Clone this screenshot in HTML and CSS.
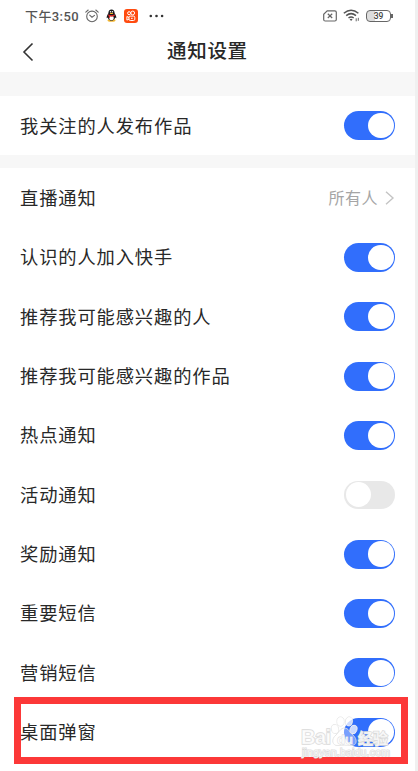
FILE: index.html
```html
<!DOCTYPE html>
<html lang="zh-CN">
  <head>
    <meta charset="UTF-8" />
    <meta name="viewport" content="width=device-width, initial-scale=1.0" />
    <title>通知设置</title>
    <link rel="stylesheet" href="styles.css">
  </head>
  <body>
    <div class="screen">
      <div class="status-bar">
        <span class="time">下午3:50</span>
        <svg class="alarm" width="14" height="14" viewBox="0 0 14 14" fill="none" stroke="#666" stroke-width="1.1" stroke-linecap="round">
          <circle cx="7" cy="7.4" r="5.3" />
          <path d="M.8 3.2 3.2 1M13.2 3.2 10.8 1M4.7 6.2 7 8.2l2.5-1.8" />
        </svg>
        <svg class="penguin" width="11" height="13" viewBox="0 0 11 13">
          <ellipse cx="5.5" cy="11.4" rx="4" ry="1.3" fill="#f2b632" />
          <path d="M5.5.4C3.5.4 2.3 1.9 2.4 4.2 1.3 6 .5 7.4.7 9.2l1-.7c.5 2 2 3.2 3.8 3.2s3.3-1.2 3.8-3.2l1 .7c.2-1.8-.6-3.2-1.7-5C8.7 1.9 7.5.4 5.5.4z" fill="#16181c" />
          <ellipse cx="5.5" cy="9" rx="2.3" ry="2.2" fill="#fff" />
          <circle cx="4.5" cy="2.8" r=".7" fill="#fff" />
          <circle cx="6.5" cy="2.8" r=".7" fill="#fff" />
          <ellipse cx="5.5" cy="4.4" rx="1.7" ry=".6" fill="#f2b632" />
          <path d="M2.2 5.300c2 1.200 4.600 1.200 6.600 0v1.500c-1.600.8-3.300 1-4.800.7v1.300H2.800V6.900l-.6-.3z" fill="#dc2a2a" />
        </svg>
        <svg class="kuaishou" width="14" height="14" viewBox="0 0 14 14">
          <rect width="14" height="14" rx="3" fill="#ff4b10" />
          <g fill="none" stroke="#fff" stroke-width="1">
            <circle cx="5.1" cy="4.2" r="1.5" />
            <circle cx="8.7" cy="4" r="1.9" />
            <rect x="5" y="7.1" width="5.8" height="4.4" rx="1.3" />
            <path d="M5 8.5 2.9 7.5v3.600L5 10.1M7 9.3h1.7" />
          </g>
        </svg>
        <svg class="more" width="15" height="4" viewBox="0 0 15 4" fill="#333">
          <circle cx="1.8" cy="2" r="1.3" />
          <circle cx="7.5" cy="2" r="1.3" />
          <circle cx="13.1" cy="2" r="1.3" />
        </svg>
        <div class="status-right">
          <svg width="14" height="12" viewBox="0 0 14 12" fill="none" stroke="#666" stroke-width="1.2">
            <path d="M4.2.8h7.6q1.5 0 1.5 1.5v7.200q0 1.5-1.5 1.5H2.200Q.7 11 .7 9.500V4.200z" />
            <path d="m4.800 3.800 4.400 4.200M9.200 3.800 4.800 8" />
          </svg>
          <svg width="17" height="13" viewBox="0 0 17 13" fill="none" stroke="#555" stroke-width="1.5">
            <path d="M.8 4.300q7.300-6.200 14.600 0M3.200 6.700q4.900-4.100 9.800 0M5.500 9q2.600-2 5.200 0" />
            <path d="m6.600 10.200 1.500 1.700 1.500-1.700q-1.500-1-3 0z" fill="#555" stroke="none" />
            <path d="M13.200 9.300v3M15.300 8.800v3" stroke-width=".9" />
          </svg>
          <div class="battery">39</div>
        </div>
      </div>

      <div class="header">
        <svg class="back" width="12" height="20" viewBox="0 0 12 20" fill="none" stroke="#333" stroke-width="1.6">
          <path d="M10.500 1.500 2 10l8.500 8.500" />
        </svg>
        <h1>通知设置</h1>
      </div>

      <div class="group">
        <div class="row"><span>我关注的人发布作品</span><div class="switch on"></div></div>
      </div>

      <div class="group list">
        <div class="row">
          <span>直播通知</span>
          <div class="value">
            <span>所有人</span>
            <svg width="10" height="16" viewBox="0 0 10 16" fill="none" stroke="#c4c4c4" stroke-width="1.4">
              <path d="m1 1.700 7 6.300-7 6.300" />
            </svg>
          </div>
        </div>
        <div class="row"><span>认识的人加入快手</span><div class="switch on"></div></div>
        <div class="row"><span>推荐我可能感兴趣的人</span><div class="switch on"></div></div>
        <div class="row"><span>推荐我可能感兴趣的作品</span><div class="switch on"></div></div>
        <div class="row"><span>热点通知</span><div class="switch on"></div></div>
        <div class="row"><span>活动通知</span><div class="switch"></div></div>
        <div class="row"><span>奖励通知</span><div class="switch on"></div></div>
        <div class="row"><span>重要短信</span><div class="switch on"></div></div>
        <div class="row"><span>营销短信</span><div class="switch on"></div></div>
        <div class="row"><span>桌面弹窗</span><div class="switch on"></div></div>
      </div>

      <div class="highlight"></div>

      <svg class="watermark" width="100" height="52" viewBox="0 0 100 52">
        <ellipse cx="35" cy="19" rx="3.500" ry="4.500" transform="rotate(-15 35 19)" />
        <ellipse cx="40.500" cy="11.500" rx="3.500" ry="4.500" />
        <ellipse cx="49" cy="11.500" rx="3.500" ry="4.500" transform="rotate(10 49 11.500)" />
        <ellipse cx="53.500" cy="19.500" rx="3.500" ry="4.500" transform="rotate(20 53.500 19.500)" />
        <path class="pad" d="M44.500 18c-4 0-5 4-8.500 7-5 4-4 11 2 10.500 4-.5 9-.5 13 0 6 .5 7-6 2-10.500-3.500-3-4.500-7-8.500-7z" />
        <text class="brand" x="1" y="34" textLength="30">Bai</text>
        <text class="du" x="37" y="33.500" textLength="16">du</text>
        <text class="brand-cn" x="58" y="34" textLength="30">经验</text>
        <text class="site" x="2" y="46" textLength="88">jingyan.baidu.com</text>
      </svg>
    </div>
  </body>
</html>
```
FILE: styles.css
```css
* {
  box-sizing: border-box;
}

body {
  margin: 0;
  background: #f0f0f0;
  font-family: "Noto Sans CJK SC", sans-serif;
  color: #282828;
}

.screen {
  position: relative;
  width: 415px;
  height: 771px;
  background: #f7f7f7;
  overflow: hidden;
}

.status-bar {
  display: flex;
  align-items: center;
  height: 31px;
  padding: 0 22px 0 25px;
  background: #fff;
}

.time {
  width: 60px;
  padding-bottom: 1px;
  font-family: Roboto, "Noto Sans CJK SC", sans-serif;
  font-size: 13px;
  font-weight: 500;
  letter-spacing: 0.4px;
  white-space: nowrap;
  color: #555;
}

.penguin {
  margin-left: 7px;
}

.kuaishou {
  margin-left: 7px;
}

.more {
  margin-left: 11px;
}

.status-right {
  display: flex;
  align-items: center;
  gap: 6px;
  margin-left: auto;
}

.battery {
  position: relative;
  width: 25px;
  height: 12px;
  margin-right: 2px;
  border: 1.5px solid #666;
  border-radius: 4px;
  background: linear-gradient(90deg, #ddd 36%, #fff 36%);
  font-family: Roboto, sans-serif;
  font-size: 8.5px;
  font-weight: 500;
  line-height: 10px;
  text-align: center;
  color: #444;
}

.battery::after {
  content: "";
  position: absolute;
  right: -3px;
  top: 3px;
  width: 2px;
  height: 4px;
  background: #666;
}

.header {
  display: flex;
  align-items: center;
  height: 41px;
  padding-left: 22px;
  background: #fff;
}

.header h1 {
  margin: 0 0 0 133px;
  padding-bottom: 3px;
  font-size: 19.5px;
  font-weight: 500;
  line-height: 38px;
  letter-spacing: 0.7px;
}

.group {
  margin-top: 24px;
  padding: 0 20px;
  background: #fff;
}

.list {
  margin-top: 13px;
  height: 603px;
}

.row {
  display: flex;
  align-items: center;
  justify-content: space-between;
  height: 59.35px;
  font-size: 18.3px;
  letter-spacing: 0.86px;
}

.row span {
  padding-bottom: 2px;
}

.value {
  display: flex;
  align-items: center;
  gap: 7px;
  font-size: 16px;
  letter-spacing: 0.5px;
  color: #a5a5a5;
}

.switch {
  display: flex;
  align-items: center;
  width: 51px;
  height: 28px;
  padding: 0 1.5px;
  border-radius: 15px;
  background: #e8e8e8;
}

.switch::before {
  content: "";
  width: 25.5px;
  height: 25.5px;
  border-radius: 50%;
  background: #fff;
}

.switch.on {
  justify-content: flex-end;
  height: 29px;
  background: #316efc;
}

/* red frame drawn over the last row */
.highlight {
  position: absolute;
  left: 14px;
  top: 697px;
  width: 394px;
  height: 67px;
  border: 7px solid #fc3838;
}

.watermark {
  position: absolute;
  left: 300px;
  top: 710px;
  fill: #fff;
  fill-opacity: 0.75;
  stroke: #dadada;
  stroke-width: 0.8px;
  font-family: "Liberation Sans", "Noto Sans CJK SC", sans-serif;
  paint-order: stroke;
}

.watermark .pad {
  fill-opacity: 0.35;
}

.brand {
  font-size: 20px;
  font-weight: bold;
  stroke-width: 1.4px;
}

.du {
  font-size: 13px;
  font-weight: bold;
}

.brand-cn {
  font-family: "Noto Sans CJK SC", sans-serif;
  font-size: 15px;
  font-weight: bold;
  stroke-width: 1.4px;
}

.site {
  font-size: 10.5px;
  stroke-width: 1.2px;
}
```
